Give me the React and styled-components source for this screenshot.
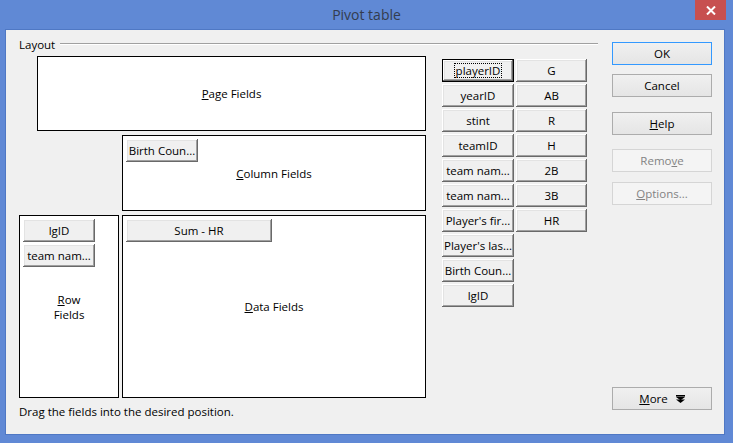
import React from 'react';
import styled, { createGlobalStyle } from 'styled-components';

const GlobalStyle = createGlobalStyle`
  html, body {
    margin: 0;
    padding: 0;
    background: #6089d5;
  }
  * {
    box-sizing: border-box;
  }
`;

const Window = styled.div`
  width: 733px;
  height: 443px;
  background: #6089d5;
  display: flex;
  flex-direction: column;
  font-family: 'Open Sans', 'Noto Sans', sans-serif;
  font-size: 11.5px;
  color: #000;
`;

const TitleBar = styled.div`
  position: relative;
  height: 29px;
  flex-shrink: 0;
  display: flex;
  align-items: center;
  justify-content: center;
  font-size: 14px;
  color: #333c4e;
  padding-bottom: 1px;
`;

const CloseButton = styled.div`
  position: absolute;
  top: 0;
  right: 7px;
  width: 31px;
  height: 20px;
  background: #c75050;
  display: flex;
  align-items: center;
  justify-content: center;
`;

const Client = styled.div`
  flex: 1;
  margin: 0 8px 8px 5px;
  border: 1px solid #4f78c4;
  background: #f0f0f0;
  display: flex;
  padding: 7px 11px 0 13px;
`;

const LeftPane = styled.div`
  width: 579px;
  display: flex;
  flex-direction: column;
`;

const GroupHeader = styled.div`
  height: 14px;
  display: flex;
  align-items: center;
  gap: 5px;
`;

const GroupRule = styled.div`
  flex: 1;
  height: 2px;
  border-top: 1px solid #a0a0a0;
  border-bottom: 1px solid #ffffff;
`;

const LayoutBody = styled.div`
  display: flex;
  margin-top: 5px;
`;

const Zones = styled.div`
  display: grid;
  grid-template-columns: 100px 304px;
  grid-template-rows: 75px 76px 183px;
  column-gap: 3px;
  row-gap: 4px;
`;

const Zone = styled.div`
  position: relative;
  background: #fff;
  border: 1px solid #000;
  padding: 3px;
  display: flex;
  flex-direction: column;
  align-items: flex-start;
  gap: 2px;
  grid-column: ${(p) => p.$col};
  grid-row: ${(p) => p.$row};
  margin-left: ${(p) => p.$indent || 0}px;
`;

const ZoneLabel = styled.div`
  position: absolute;
  inset: 0;
  display: flex;
  align-items: center;
  justify-content: center;
  text-align: center;
  line-height: 15px;
  pointer-events: none;
`;

const Accel = styled.span`
  text-decoration: underline;
`;

const FieldList = styled.div`
  display: grid;
  grid-template-columns: 72px 71px;
  grid-template-rows: repeat(10, 23px);
  grid-auto-flow: column;
  column-gap: 2px;
  row-gap: 2px;
  margin: 3px 0 0 16px;
  align-content: start;
`;

const FieldButton = styled.div`
  position: relative;
  z-index: 1;
  width: ${(p) => p.$w || 72}px;
  height: ${(p) => p.$h || 23}px;
  flex-shrink: 0;
  background: #f0f0f0;
  display: flex;
  align-items: center;
  justify-content: center;
  white-space: nowrap;
  overflow: hidden;
  border: ${(p) => (p.$focus ? '1px solid #000' : 'none')};
  box-shadow: inset -1px -1px #696969, inset 1px 1px #ffffff,
    inset -2px -2px #a0a0a0, inset 2px 2px #e3e3e3;
`;

const FocusText = styled.span`
  outline: 1px dotted #000;
  outline-offset: 0;
  padding: 0 1px;
  line-height: 13px;
`;

const Hint = styled.div`
  margin-top: 7px;
  height: 14px;
  line-height: 14px;
`;

const RightPane = styled.div`
  width: 100px;
  margin-left: 14px;
  display: flex;
  flex-direction: column;
  padding: 5px 0 24px;
`;

const DialogButton = styled.div`
  height: 23px;
  display: flex;
  align-items: center;
  justify-content: center;
  gap: 8px;
  border: 1px solid ${(p) => (p.$default ? '#3399ff' : p.$disabled ? '#d5d5d5' : '#acacac')};
  background: ${(p) => (p.$disabled ? '#f4f4f4' : 'linear-gradient(#f0f0f0, #e5e5e5)')};
  color: ${(p) => (p.$disabled ? '#838383' : '#000')};
  margin-top: ${(p) => p.$gap || 0}px;
  ${(p) => p.$push && 'margin-top: auto;'}
`;

const MoreIcon = () => (
  <svg width="9" height="8" viewBox="0 0 9 8">
    <rect x="0" y="0" width="9" height="1.6" fill="#000" />
    <polygon points="0,2 9,2 4.5,5.2" fill="#000" />
    <polygon points="0,4.6 9,4.6 4.5,8" fill="#000" />
  </svg>
);

const CloseIcon = () => (
  <svg width="10" height="9" viewBox="0 0 10 9">
    <path d="M1 0.5 L9 8.5 M9 0.5 L1 8.5" stroke="#fff" strokeWidth="2" />
  </svg>
);

const fieldsLeft = [
  'playerID',
  'yearID',
  'stint',
  'teamID',
  'team nam...',
  'team nam...',
  "Player's fir...",
  "Player's las...",
  'Birth Coun...',
  'lgID',
];

const fieldsRight = ['G', 'AB', 'R', 'H', '2B', '3B', 'HR'];

export default function App() {
  return (
    <Window>
      <GlobalStyle />
      <TitleBar>
        Pivot table
        <CloseButton>
          <CloseIcon />
        </CloseButton>
      </TitleBar>
      <Client>
        <LeftPane>
          <GroupHeader>
            <span>Layout</span>
            <GroupRule />
          </GroupHeader>
          <LayoutBody>
            <Zones>
              <Zone $col="1 / 3" $row="1" $indent={18}>
                <ZoneLabel>
                  <span>
                    <Accel>P</Accel>age Fields
                  </span>
                </ZoneLabel>
              </Zone>
              <Zone $col="2" $row="2">
                <ZoneLabel>
                  <span>
                    <Accel>C</Accel>olumn Fields
                  </span>
                </ZoneLabel>
                <FieldButton>Birth Coun...</FieldButton>
              </Zone>
              <Zone $col="1" $row="3">
                <ZoneLabel>
                  <span>
                    <Accel>R</Accel>ow
                    <br />
                    Fields
                  </span>
                </ZoneLabel>
                <FieldButton>lgID</FieldButton>
                <FieldButton>team nam...</FieldButton>
              </Zone>
              <Zone $col="2" $row="3">
                <ZoneLabel>
                  <span>
                    <Accel>D</Accel>ata Fields
                  </span>
                </ZoneLabel>
                <FieldButton $w={146}>Sum - HR</FieldButton>
              </Zone>
            </Zones>
            <FieldList>
              {fieldsLeft.map((f, i) => (
                <FieldButton key={'l' + i} $focus={i === 0}>
                  {i === 0 ? <FocusText>{f}</FocusText> : f}
                </FieldButton>
              ))}
              {fieldsRight.map((f) => (
                <FieldButton key={f} $w={71}>
                  {f}
                </FieldButton>
              ))}
            </FieldList>
          </LayoutBody>
          <Hint>Drag the fields into the desired position.</Hint>
        </LeftPane>
        <RightPane>
          <DialogButton $default>OK</DialogButton>
          <DialogButton $gap={9}>Cancel</DialogButton>
          <DialogButton $gap={15}>
            <span>
              <Accel>H</Accel>elp
            </span>
          </DialogButton>
          <DialogButton $gap={14} $disabled>
            <span>
              Remo<Accel>v</Accel>e
            </span>
          </DialogButton>
          <DialogButton $gap={10} $disabled>
            <span>
              <Accel>O</Accel>ptions...
            </span>
          </DialogButton>
          <DialogButton $push>
            <span>
              <Accel>M</Accel>ore
            </span>
            <MoreIcon />
          </DialogButton>
        </RightPane>
      </Client>
    </Window>
  );
}
